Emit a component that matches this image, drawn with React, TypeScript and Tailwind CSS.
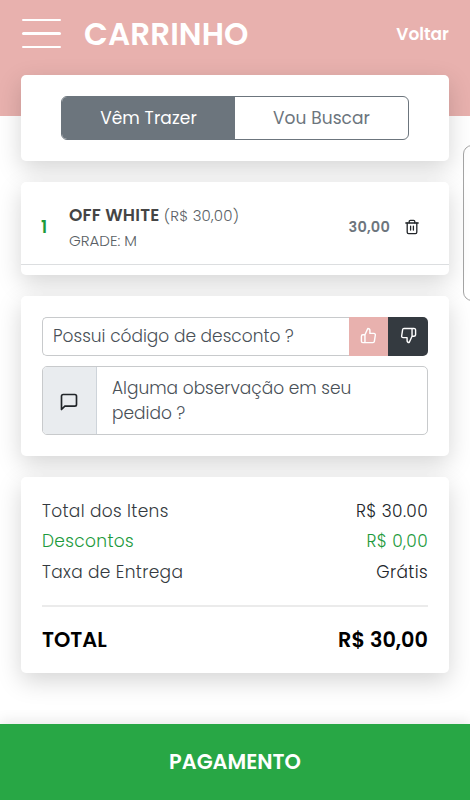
import { FiMessageSquare, FiThumbsDown, FiThumbsUp } from 'react-icons/fi';

interface SummaryRow {
  label: string;
  value: string;
  labelClass: string;
  valueClass: string;
}

const SUMMARY: SummaryRow[] = [
  {
    label: 'Total dos Itens',
    value: 'R$ 30.00',
    labelClass: 'text-[#343a40]',
    valueClass: 'text-[#212529]',
  },
  {
    label: 'Descontos',
    value: 'R$ 0,00',
    labelClass: 'text-[#1c9a3c]',
    valueClass: 'text-[#1c9a3c]',
  },
  {
    label: 'Taxa de Entrega',
    value: 'Grátis',
    labelClass: 'text-[#343a40]',
    valueClass: 'text-[#212529]',
  },
];

const CARD = 'rounded-[5px] bg-white shadow-[0_8px_24px_rgba(0,0,0,0.17)]';

function TrashIcon({ className }: { className?: string }) {
  return (
    <svg
      viewBox="0 0 16 16"
      fill="none"
      stroke="currentColor"
      strokeWidth="1.3"
      strokeLinecap="round"
      strokeLinejoin="round"
      className={className}
    >
      <path d="M1.8 4h12.4" />
      <path d="M5.2 3.8V2.6c0-.8.5-1.2 1.2-1.2h3.2c.7 0 1.2.4 1.2 1.2v1.2" />
      <path d="M3.2 4v9.2c0 .9.5 1.4 1.4 1.4h6.8c.9 0 1.4-.5 1.4-1.4V4" />
      <path d="M6.6 7.2v3.8M9.4 7.2v3.8" />
    </svg>
  );
}

function Header() {
  return (
    <header className="flex h-[116px] items-start bg-[#e8b1ae] px-[21px] text-white">
      <button className="mt-[19px] flex w-10 flex-col gap-[11px] pl-[1px]" aria-label="Menu">
        <span className="h-[2.4px] rounded-full bg-white" />
        <span className="h-[2.4px] rounded-full bg-white" />
        <span className="h-[2.4px] rounded-full bg-white" />
      </button>
      <h1 className="ml-[23px] mt-[14px] text-[31px] leading-10 font-semibold tracking-[0.1px] whitespace-nowrap">
        CARRINHO
      </h1>
      <a className="ml-auto mt-[22px] text-[17px] leading-6 font-semibold">Voltar</a>
    </header>
  );
}

function DeliveryToggle() {
  return (
    <section className={`${CARD} h-[86px] px-10 py-[21px]`}>
      <div className="flex h-[44px] overflow-hidden rounded-[6px] border border-[#6c757d] text-[17px]">
        <button className="w-1/2 bg-[#6c757d] pt-px tracking-[0.1px] text-white">Vêm Trazer</button>
        <button className="w-1/2 pt-px tracking-[0.1px] text-[#6c757d]">Vou Buscar</button>
      </div>
    </section>
  );
}

function CartItem() {
  return (
    <section className={`${CARD} h-[93px]`}>
      <div className="flex h-[83px] items-center border-b border-[#dcdee0] pl-5 pr-7">
        <span className="mt-[10px] w-7 text-[17px] font-semibold text-[#1c9a3c]">1</span>
        <div className="mt-[9px] leading-[25px] text-[#5a5f65]">
          <p className="whitespace-nowrap">
            <span className="text-[17px] font-semibold tracking-[0.2px] text-[#454545]">OFF WHITE</span>{' '}
            <span className="text-[15px] font-light tracking-[0.2px]">(R$ 30,00)</span>
          </p>
          <p className="text-[15px] font-light">GRADE: M</p>
        </div>
        <span className="ml-auto mt-[10px] text-[14.5px] font-semibold tracking-[0.2px] text-[#6c757d]">30,00</span>
        <TrashIcon className="mr-px ml-[14px] mt-[7px] size-4 text-[#212529]" />
      </div>
    </section>
  );
}

function OrderNotes() {
  return (
    <section className={`${CARD} flex h-40 flex-col gap-[10px] px-[21px] pt-[21px]`}>
      <div className="flex h-[39px] text-[17px]">
        <div className="flex flex-1 items-center rounded-l-[5px] border border-r-0 border-[#c8cacc] pl-[10px] font-light text-[#495057]">
          Possui código de desconto ?
        </div>
        <button className="flex w-[39px] items-center justify-center bg-[#e8b1ae] pb-[3px] text-white">
          <FiThumbsUp className="size-[17px]" />
        </button>
        <button className="flex w-10 items-center justify-center rounded-r-[5px] bg-[#343a40] pb-[3px] text-white">
          <FiThumbsDown className="size-[17px]" />
        </button>
      </div>
      <div className="flex h-[69px] overflow-hidden rounded-[5px] border border-[#c8cacc]">
        <div className="flex w-[54px] items-center justify-center border-r border-[#ced4da] bg-[#e9ecef] pt-[2px] pr-px">
          <FiMessageSquare className="size-5 text-[#212529]" />
        </div>
        <p className="flex-1 pl-[15px] pt-[9px] text-[17px] leading-[25px] font-light text-[#495057]">
          Alguma observação em seu
          <br />
          pedido ?
        </p>
      </div>
    </section>
  );
}

function Summary() {
  return (
    <section className={`${CARD} h-[196px] px-[21px] pt-[19px]`}>
      {SUMMARY.map((row) => (
        <div
          key={row.label}
          className="flex h-[30.5px] items-center justify-between text-[17px] font-light tracking-[0.35px]"
        >
          <span className={row.labelClass}>{row.label}</span>
          <span className={row.valueClass}>{row.value}</span>
        </div>
      ))}
      <div className="mt-[17px] flex justify-between border-t-2 border-[#ebebeb] pt-[17px] text-[20.8px] leading-[32px] font-semibold text-black">
        <span>TOTAL</span>
        <span>R$ 30,00</span>
      </div>
    </section>
  );
}

export default function App() {
  return (
    <div className="relative flex h-[800px] w-full flex-col overflow-hidden bg-white font-[Poppins,Inter,sans-serif]">
      <Header />
      <div className="absolute top-[145px] left-[463px] h-[156px] w-10 rounded-[9px] border border-[#a5a5a5]" />
      <main className="relative -mt-[41px] flex flex-1 flex-col gap-[21px] px-[21px]">
        <DeliveryToggle />
        <CartItem />
        <OrderNotes />
        <Summary />
      </main>
      <button className="relative h-[76px] bg-[#28a745] text-[20.8px] font-semibold text-white shadow-[0_-4px_12px_rgba(0,0,0,0.08)]">
        PAGAMENTO
      </button>
    </div>
  );
}
